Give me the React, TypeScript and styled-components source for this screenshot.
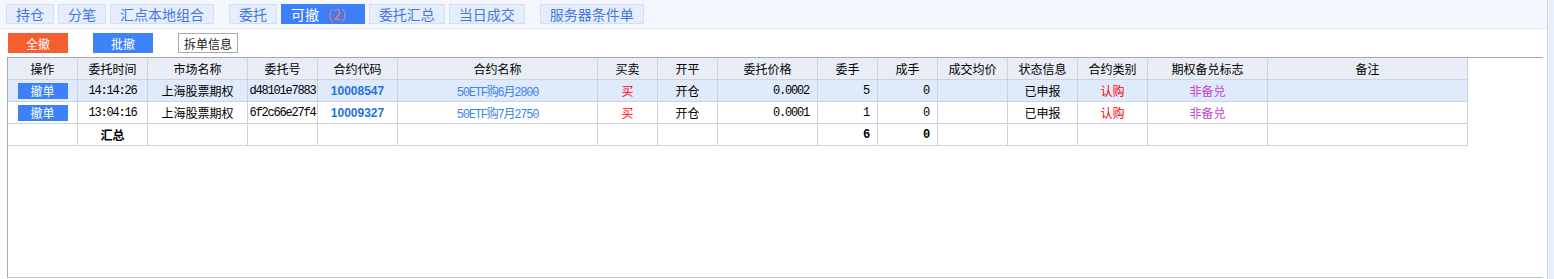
import React from 'react';
import styled, { createGlobalStyle } from 'styled-components';

const GlobalStyle = createGlobalStyle`
  html, body {
    margin: 0;
    padding: 0;
    background: #ffffff;
  }
  body {
    font-family: "Noto Sans CJK SC", "Liberation Sans", sans-serif;
    font-size: 12px;
    color: #000;
  }
`;

interface Order {
  time: string;
  market: string;
  orderNo: string;
  code: string;
  name: string;
  side: string;
  openClose: string;
  price: string;
  qty: string;
  filled: string;
  avgPrice: string;
  status: string;
  kind: string;
  covered: string;
  note: string;
}

const orders: Order[] = [
  {
    time: '14:14:26',
    market: '上海股票期权',
    orderNo: 'd48101e7883',
    code: '10008547',
    name: '50ETF购6月2800',
    side: '买',
    openClose: '开仓',
    price: '0.0002',
    qty: '5',
    filled: '0',
    avgPrice: '',
    status: '已申报',
    kind: '认购',
    covered: '非备兑',
    note: '',
  },
  {
    time: '13:04:16',
    market: '上海股票期权',
    orderNo: '6f2c66e27f4',
    code: '10009327',
    name: '50ETF购7月2750',
    side: '买',
    openClose: '开仓',
    price: '0.0001',
    qty: '1',
    filled: '0',
    avgPrice: '',
    status: '已申报',
    kind: '认购',
    covered: '非备兑',
    note: '',
  },
];

const columns = [
  { title: '操作', width: 70 },
  { title: '委托时间', width: 70 },
  { title: '市场名称', width: 100 },
  { title: '委托号', width: 70 },
  { title: '合约代码', width: 80 },
  { title: '合约名称', width: 200 },
  { title: '买卖', width: 60 },
  { title: '开平', width: 60 },
  { title: '委托价格', width: 100 },
  { title: '委手', width: 60 },
  { title: '成手', width: 60 },
  { title: '成交均价', width: 70 },
  { title: '状态信息', width: 70 },
  { title: '合约类别', width: 70 },
  { title: '期权备兑标志', width: 120 },
  { title: '备注', width: 200 },
];

const tabs = [
  { label: '持仓' },
  { label: '分笔' },
  { label: '汇点本地组合', gapAfter: true },
  { label: '委托' },
  { label: '可撤', count: 2, active: true },
  { label: '委托汇总' },
  { label: '当日成交', gapAfter: true },
  { label: '服务器条件单' },
];

const App: React.FC = () => {
  const totalQty = orders.reduce((s, o) => s + Number(o.qty), 0);
  const totalFilled = orders.reduce((s, o) => s + Number(o.filled), 0);

  return (
    <Page>
      <GlobalStyle />
      <Main>
        <TabBar>
          {tabs.map((t) => (
            <Tab key={t.label} $active={!!t.active} $gapAfter={!!t.gapAfter}>
              {t.label}
              {t.count !== undefined && <TabCount>（{t.count}）</TabCount>}
            </Tab>
          ))}
        </TabBar>

        <ActionRow>
          <ActionButton $tone="orange">全撤</ActionButton>
          <ActionButton $tone="blue">批撤</ActionButton>
          <PlainButton>拆单信息</PlainButton>
        </ActionRow>

        <Panel>
          <Grid>
            {columns.map((c) => (
              <HeadCell key={c.title}>{c.title}</HeadCell>
            ))}

            {orders.map((o, i) => {
              const sel = i === 0;
              return (
                <React.Fragment key={o.orderNo}>
                  <Cell $selected={sel}>
                    <CancelButton>撤单</CancelButton>
                  </Cell>
                  <Cell $selected={sel} $mono>{o.time}</Cell>
                  <Cell $selected={sel}>{o.market}</Cell>
                  <Cell $selected={sel} $mono>{o.orderNo}</Cell>
                  <Cell $selected={sel}>
                    <Code>{o.code}</Code>
                  </Cell>
                  <Cell $selected={sel} $mono $color="#3a86e8">{o.name}</Cell>
                  <Cell $selected={sel} $color="#ff0000">{o.side}</Cell>
                  <Cell $selected={sel}>{o.openClose}</Cell>
                  <Cell $selected={sel} $align="right" $mono>{o.price}</Cell>
                  <Cell $selected={sel} $align="right" $mono>{o.qty}</Cell>
                  <Cell $selected={sel} $align="right" $mono>{o.filled}</Cell>
                  <Cell $selected={sel}>{o.avgPrice}</Cell>
                  <Cell $selected={sel}>{o.status}</Cell>
                  <Cell $selected={sel} $color="#ff0000">{o.kind}</Cell>
                  <Cell $selected={sel} $color="#c444c8">{o.covered}</Cell>
                  <Cell $selected={sel}>{o.note}</Cell>
                </React.Fragment>
              );
            })}

            <Cell />
            <Cell $bold>汇总</Cell>
            <Cell />
            <Cell />
            <Cell />
            <Cell />
            <Cell />
            <Cell />
            <Cell />
            <Cell $align="right" $mono $bold>{totalQty}</Cell>
            <Cell $align="right" $mono $bold>{totalFilled}</Cell>
            <Cell />
            <Cell />
            <Cell />
            <Cell />
            <Cell />
          </Grid>
        </Panel>
      </Main>
      <SideStrip />
    </Page>
  );
};

const Page = styled.div`
  display: flex;
  width: 1554px;
  height: 279px;
  overflow: hidden;
`;

const Main = styled.div`
  width: 1547px;
  border-right: 1px solid #d4d8de;
  display: flex;
  flex-direction: column;
`;

const SideStrip = styled.div`
  flex: 1;
  background: #e9effb;
`;

const TabBar = styled.div`
  height: 29px;
  box-sizing: border-box;
  background: #f4f7fd;
  border-bottom: 1px solid #e0e5ee;
  display: flex;
  align-items: flex-start;
  padding: 4px 0 0 6px;
  gap: 4px;
`;

const Tab = styled.div<{ $active: boolean; $gapAfter: boolean }>`
  height: 20px;
  box-sizing: border-box;
  padding: 0 9px;
  display: flex;
  align-items: center;
  font-family: "Noto Sans CJK SC", sans-serif;
  font-size: 14px;
  line-height: 18px;
  background: ${(p) => (p.$active ? '#3d7ff6' : '#e6eefd')};
  border: 1px solid ${(p) => (p.$active ? '#3d7ff6' : '#d2dff8')};
  color: ${(p) => (p.$active ? '#ffffff' : '#4478dc')};
  margin-right: ${(p) => (p.$gapAfter ? '11px' : '0')};
  white-space: pre;
`;

const TabCount = styled.span`
  color: #f47a68;
`;

const ActionRow = styled.div`
  height: 28px;
  display: flex;
  align-items: flex-start;
  padding: 4px 0 0 8px;
  box-sizing: border-box;
  gap: 25px;
`;

const ActionButton = styled.div<{ $tone: 'orange' | 'blue' }>`
  width: 60px;
  height: 20px;
  display: flex;
  align-items: center;
  justify-content: center;
  color: #ffffff;
  font-size: 12px;
  background: ${(p) => (p.$tone === 'orange' ? '#f55e2f' : '#3e82f7')};
`;

const PlainButton = styled.div`
  width: 60px;
  height: 20px;
  box-sizing: border-box;
  border: 1px solid #a9a9a9;
  background: #ffffff;
  display: flex;
  align-items: center;
  justify-content: center;
  font-size: 12px;
  color: #1a1a1a;
`;

const Panel = styled.div`
  margin-left: 7px;
  width: 1536px;
  height: 221px;
  box-sizing: border-box;
  border-top: 1px solid #a8a8a8;
  border-left: 1px solid #a8a8a8;
  border-bottom: 1px solid #b9c3d3;
  background: #ffffff;
`;

const Grid = styled.div`
  display: grid;
  grid-template-columns: ${columns.map((c) => `${c.width}px`).join(' ')};
  grid-auto-rows: 22px;
`;

const HeadCell = styled.div`
  box-sizing: border-box;
  border-right: 1px solid #c9d3e1;
  border-bottom: 1px solid #c9d3e1;
  background: #e9edf5;
  display: flex;
  align-items: center;
  justify-content: center;
  font-size: 12px;
  color: #000;
`;

const Cell = styled.div<{
  $selected?: boolean;
  $align?: 'center' | 'right';
  $mono?: boolean;
  $bold?: boolean;
  $color?: string;
}>`
  box-sizing: border-box;
  border-right: 1px solid #c9d3e1;
  border-bottom: 1px solid #c9d3e1;
  background: ${(p) => (p.$selected ? '#dfeafb' : '#ffffff')};
  display: flex;
  align-items: center;
  justify-content: ${(p) => (p.$align === 'right' ? 'flex-end' : 'center')};
  padding-right: ${(p) => (p.$align === 'right' ? '8px' : '0')};
  overflow: hidden;
  white-space: nowrap;
  font-family: ${(p) =>
    p.$mono
      ? '"Liberation Mono", "Noto Sans CJK SC", monospace'
      : '"Noto Sans CJK SC", sans-serif'};
  font-size: 12px;
  letter-spacing: ${(p) => (p.$mono ? '-1.2px' : '0')};
  font-weight: ${(p) => (p.$bold ? 700 : 400)};
  color: ${(p) => p.$color || '#000'};
`;

const CancelButton = styled.div`
  width: 50px;
  height: 16px;
  background: #3d80f7;
  color: #ffffff;
  font-size: 12px;
  display: flex;
  align-items: center;
  justify-content: center;
`;

const Code = styled.span`
  font-family: "Liberation Sans", sans-serif;
  font-weight: 700;
  font-size: 12px;
  color: #1f72e0;
`;

export default App;
